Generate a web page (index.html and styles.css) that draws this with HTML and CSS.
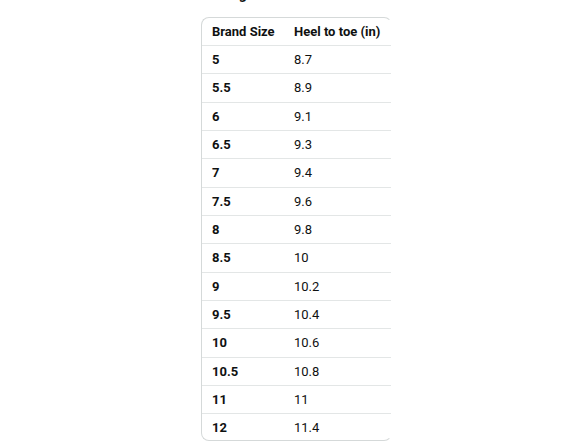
FILE: index.html
```html
<!DOCTYPE html>
<html>
<head>
<meta charset="utf-8">
<link rel="stylesheet" href="styles.css">
</head>
<body>
<div class="page">
  <h3 class="title">US Regular</h3>
  <div class="box">
    <table class="sizes">
      <thead>
        <tr><th class="c1">Brand Size</th><th class="c2">Heel to toe (in)</th></tr>
      </thead>
      <tbody>
        <tr><td class="c1">5</td><td class="c2">8.7</td></tr>
        <tr><td class="c1">5.5</td><td class="c2">8.9</td></tr>
        <tr><td class="c1">6</td><td class="c2">9.1</td></tr>
        <tr><td class="c1">6.5</td><td class="c2">9.3</td></tr>
        <tr><td class="c1">7</td><td class="c2">9.4</td></tr>
        <tr><td class="c1">7.5</td><td class="c2">9.6</td></tr>
        <tr><td class="c1">8</td><td class="c2">9.8</td></tr>
        <tr><td class="c1">8.5</td><td class="c2">10</td></tr>
        <tr><td class="c1">9</td><td class="c2">10.2</td></tr>
        <tr><td class="c1">9.5</td><td class="c2">10.4</td></tr>
        <tr><td class="c1">10</td><td class="c2">10.6</td></tr>
        <tr><td class="c1">10.5</td><td class="c2">10.8</td></tr>
        <tr><td class="c1">11</td><td class="c2">11</td></tr>
        <tr><td class="c1">12</td><td class="c2">11.4</td></tr>
      </tbody>
    </table>
  </div>
</div>
</body>
</html>
```
FILE: styles.css
```css
html, body {
  margin: 0;
  padding: 0;
  background: #ffffff;
  overflow: hidden;
}
body {
  font-family: "Roboto", "Noto Sans", Arial, sans-serif;
  color: #0f1111;
}
.page {
  padding-left: 201px;
  width: 190px;
}
.title {
  margin: -15px 0 0 0;
  font-size: 14px;
  line-height: 18px;
  font-weight: 700;
  height: 18px;
  margin-bottom: 14px;
}
.box {
  border: 1px solid #d5d9d9;
  border-right-color: transparent;
  border-radius: 8px;
  overflow: hidden;
  width: 189px;
  height: 422px;
}
.sizes {
  border-collapse: collapse;
  table-layout: fixed;
  width: 189px;
  font-size: 13px;
}
.sizes th, .sizes td {
  padding: 0;
  text-align: left;
  white-space: nowrap;
}
.sizes th {
  height: 27px;
  font-weight: 700;
  border-bottom: 1px solid #e3e6e6;
}
.sizes td {
  height: 27.33px;
  border-bottom: 1px solid #e3e6e6;
}
.sizes .c1 {
  padding-left: 10px;
  width: 82px;
  font-weight: 700;
}
.sizes td.c2 {
  font-weight: 400;
}
```
